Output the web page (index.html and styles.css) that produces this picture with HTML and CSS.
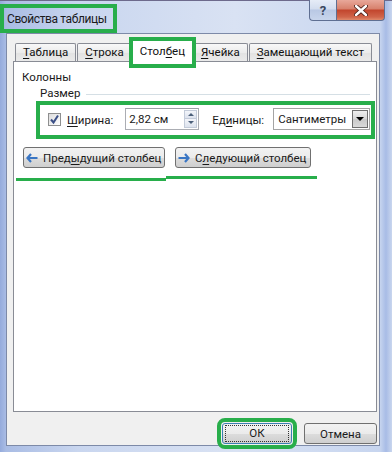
FILE: index.html
```html
<!DOCTYPE html>
<html>
<head>
    <title>Свойства таблицы</title>
    <link rel="stylesheet" href="styles.css">
</head>
<body>
    <div class="window">
        <div class="titlebar">
            <span class="title">Свойства таблицы</span>
            <div class="caption-buttons">
                <div class="cap-btn help-btn">?</div>
                <div class="cap-btn close-btn">
                    <svg width="14" height="11" viewBox="0 0 14 11">
                        <path d="M2 1 L12 10 M12 1 L2 10" stroke="#4a1f18" stroke-width="4.2" stroke-linecap="round"/>
                        <path d="M2 1 L12 10 M12 1 L2 10" stroke="#ffffff" stroke-width="2.4" stroke-linecap="round"/>
                    </svg>
                </div>
            </div>
        </div>

        <div class="client">
            <div class="tabs">
                <div class="tab"><u>Т</u>аблица</div>
                <div class="tab"><u>С</u>трока</div>
                <div class="tab active">Стол<u>б</u>ец</div>
                <div class="tab"><u>Я</u>чейка</div>
                <div class="tab"><u>З</u>амещающий текст</div>
            </div>

            <div class="panel">
                <div class="heading">Колонны</div>
                <div class="group-title">
                    <span>Размер</span>
                    <div class="group-line"></div>
                </div>

                <div class="size-row">
                    <div class="checkbox">
                        <svg width="11" height="11" viewBox="0 0 11 11">
                            <path d="M2 5.5 L4.5 8.5 L9 1.5" fill="none" stroke="#3b4f86" stroke-width="2"/>
                        </svg>
                    </div>
                    <span class="field-label"><u>Ш</u>ирина:</span>
                    <div class="spin-input">
                        <span class="spin-value">2,82 см</span>
                        <div class="spin-buttons">
                            <div class="spin-up"><span class="tri-up"></span></div>
                            <div class="spin-down"><span class="tri-down"></span></div>
                        </div>
                    </div>
                    <span class="field-label units-label">Ед<u>и</u>ницы:</span>
                    <div class="select">
                        <span class="select-value">Сантиметры</span>
                        <div class="select-arrow"><span class="tri-black"></span></div>
                    </div>
                </div>

                <div class="nav-buttons">
                    <div class="btn nav-btn prev-btn">
                        <svg width="12" height="10" viewBox="0 0 12 10">
                            <path d="M5 1 L1.5 5 L5 9 M1.5 5 H11.5" fill="none" stroke="#3a76c4" stroke-width="2.2"/>
                        </svg>
                        <span>Пред<u>ы</u>дущий столбец</span>
                    </div>
                    <div class="btn nav-btn next-btn">
                        <svg width="12" height="10" viewBox="0 0 12 10">
                            <path d="M7 1 L10.5 5 L7 9 M10.5 5 H0.5" fill="none" stroke="#3a76c4" stroke-width="2.2"/>
                        </svg>
                        <span>С<u>л</u>едующий столбец</span>
                    </div>
                </div>

                <div class="underline">
                    <span class="line-a"></span>
                    <span class="line-b"></span>
                </div>
            </div>

            <div class="dialog-buttons">
                <div class="btn ok-btn"><span class="focus-rect">ОК</span></div>
                <div class="btn cancel-btn">Отмена</div>
            </div>
        </div>
    </div>
</body>
</html>
```

FILE: styles.css
```css
body {
    margin: 0;
    width: 392px;
    height: 452px;
    overflow: hidden;
    font-family: Roboto, "Noto Sans", sans-serif;
    font-size: 11.5px;
    color: #1a1a1a;
    background: #ffffff;
    white-space: nowrap;
}

u {
    text-decoration: underline;
    text-underline-offset: 2px;
}

svg {
    flex-shrink: 0;
}

.window {
    height: 452px;
    box-sizing: border-box;
    display: flex;
    flex-direction: column;
    padding: 0 12px 6px 6px;
    background: linear-gradient(to right, #95abdc 0, #a9bce4 6px, #c9d6ef 20%, #d9e2f3 60%, #c7d5ef 380px, #a8bce6 386px, #c9d6ee 392px);
    border-top: 1px solid #6d6a8c;
}

.titlebar {
    height: 32px;
    display: flex;
    justify-content: space-between;
    align-items: flex-start;
    margin-left: -6px;
    margin-right: -12px;
}

.title {
    margin-top: 3px;
    border: 4px solid #28ae4b;
    padding: 1px 6px 0 3px;
    height: 20px;
    line-height: 20px;
    color: #1b1b1b;
    font-size: 12px;
    letter-spacing: -0.4px;
}

.caption-buttons {
    display: flex;
    margin-right: 7px;
    margin-top: -1px;
}

.cap-btn {
    height: 20px;
    display: flex;
    align-items: center;
    justify-content: center;
    border: 1px solid #5f6f92;
    border-top: none;
}

.help-btn {
    width: 26px;
    border-right: none;
    border-radius: 0 0 0 4px;
    background: linear-gradient(#e6ecf7, #d3ddef 45%, #b9c8e4 50%, #c8d5ec);
    color: #3b4760;
    font-weight: bold;
    font-size: 13px;
}

.close-btn {
    width: 47px;
    border-radius: 0 0 4px 0;
    background: linear-gradient(#e8a89a, #d7806c 45%, #c2452d 50%, #d0654a 85%, #e08a6c);
}

.client {
    flex: 1;
    display: flex;
    flex-direction: column;
    background: #f0f0f0;
    border: 1px solid #7d8aa8;
    padding: 9px 2px 0 6px;
}

.tabs {
    display: flex;
    align-items: flex-end;
    padding-left: 2px;
    height: 18px;
    position: relative;
    z-index: 1;
}

.tab {
    height: 17px;
    line-height: 16px;
    padding: 0 7px;
    border: 1px solid #898c95;
    border-bottom: none;
    border-radius: 2px 2px 0 0;
    background: linear-gradient(#f8f8f8, #ececec 50%, #e2e2e2 51%, #eaeaea);
    margin-right: 1px;
    color: #111111;
}

.tab.active {
    position: relative;
    height: 21px;
    line-height: 20px;
    margin: 0 -1px -1px -2px;
    padding: 0 8px;
    background: #ffffff;
    z-index: 2;
}

.tab.active::after {
    content: "";
    position: absolute;
    top: -4px;
    left: -3px;
    right: -3px;
    bottom: -6px;
    border: 4px solid #28ae4b;
}

.panel {
    height: 341px;
    background: #ffffff;
    border: 1px solid #898c95;
    padding-top: 8px;
}

.heading {
    line-height: 15px;
    padding-left: 8px;
}

.group-title {
    display: flex;
    align-items: center;
    margin: 1px 6px 0 26px;
    line-height: 15px;
}

.group-line {
    flex: 1;
    height: 1px;
    background: #d5dfe5;
    margin-left: 6px;
    margin-top: 2px;
}

.size-row {
    display: flex;
    align-items: center;
    margin: 0 0 0 22px;
    width: 323px;
    height: 30px;
    border: 4px solid #28ae4b;
    padding-left: 8px;
}

.checkbox {
    width: 11px;
    height: 11px;
    border: 1px solid #8e8f8f;
    background: linear-gradient(135deg, #dcdcdc, #ffffff);
    display: flex;
    align-items: center;
    justify-content: center;
    margin-top: -2px;
}

.field-label {
    margin-left: 6px;
}

.spin-input {
    margin-left: 12px;
    width: 72px;
    height: 20px;
    border: 1px solid #abadb3;
    border-top-color: #9ea0a7;
    background: #ffffff;
    display: flex;
    align-items: center;
    margin-top: -3px;
}

.spin-value {
    flex: 1;
    padding-left: 3px;
}

.spin-buttons {
    width: 13px;
    height: 18px;
    display: flex;
    flex-direction: column;
    margin-right: 1px;
}

.spin-up,
.spin-down {
    flex: 1;
    display: flex;
    align-items: center;
    justify-content: center;
    border: 1px solid #c3cbd9;
    background: linear-gradient(#f3f5fa, #dde3ee);
}

.spin-down {
    border-top: none;
}

.tri-up {
    border-left: 3px solid transparent;
    border-right: 3px solid transparent;
    border-bottom: 3px solid #4c607a;
}

.tri-down {
    border-left: 3px solid transparent;
    border-right: 3px solid transparent;
    border-top: 3px solid #4c607a;
}

.units-label {
    margin-left: 13px;
}

.select {
    margin-left: 9px;
    width: 95px;
    height: 20px;
    border: 1px solid #a4a4a4;
    background: #ffffff;
    display: flex;
    align-items: center;
    margin-top: -3px;
}

.select-value {
    flex: 1;
    padding-left: 4px;
}

.select-arrow {
    width: 14px;
    height: 16px;
    margin-right: 1px;
    border: 1px solid #6f6f6f;
    background: linear-gradient(#eeeeee, #d6d6d6 50%, #c9c9c9 51%, #dadada);
    display: flex;
    align-items: center;
    justify-content: center;
}

.tri-black {
    border-left: 4px solid transparent;
    border-right: 4px solid transparent;
    border-top: 4px solid #000000;
}

.btn {
    height: 19px;
    border: 1px solid #707070;
    border-radius: 3px;
    background: linear-gradient(#f2f2f2, #ebebeb 50%, #dddddd 51%, #cfcfcf);
    display: flex;
    align-items: center;
    box-sizing: content-box;
}

.nav-buttons {
    display: flex;
    gap: 10px;
    margin: 8px 0 0 9px;
}

.nav-btn {
    gap: 5px;
    padding: 0 4px 0 2px;
}

.prev-btn {
    width: 134px;
}

.next-btn {
    width: 128px;
}

.underline {
    display: flex;
    align-items: flex-start;
    margin: 8px 0 0 2px;
}

.line-a {
    width: 150px;
    height: 3px;
    margin-top: 2px;
    background: #28ae4b;
}

.line-b {
    width: 151px;
    height: 3px;
    background: #28ae4b;
}

.dialog-buttons {
    display: flex;
    justify-content: flex-end;
    gap: 12px;
    margin-top: 11px;
}

.ok-btn {
    width: 68px;
    justify-content: center;
    border-color: #3c7fb1;
    outline: 4px solid #28ae4b;
    outline-offset: 1px;
}

.focus-rect {
    width: 62px;
    height: 15px;
    line-height: 15px;
    text-align: center;
    border: 1px dotted #333333;
}

.cancel-btn {
    width: 71px;
    justify-content: center;
}
```
